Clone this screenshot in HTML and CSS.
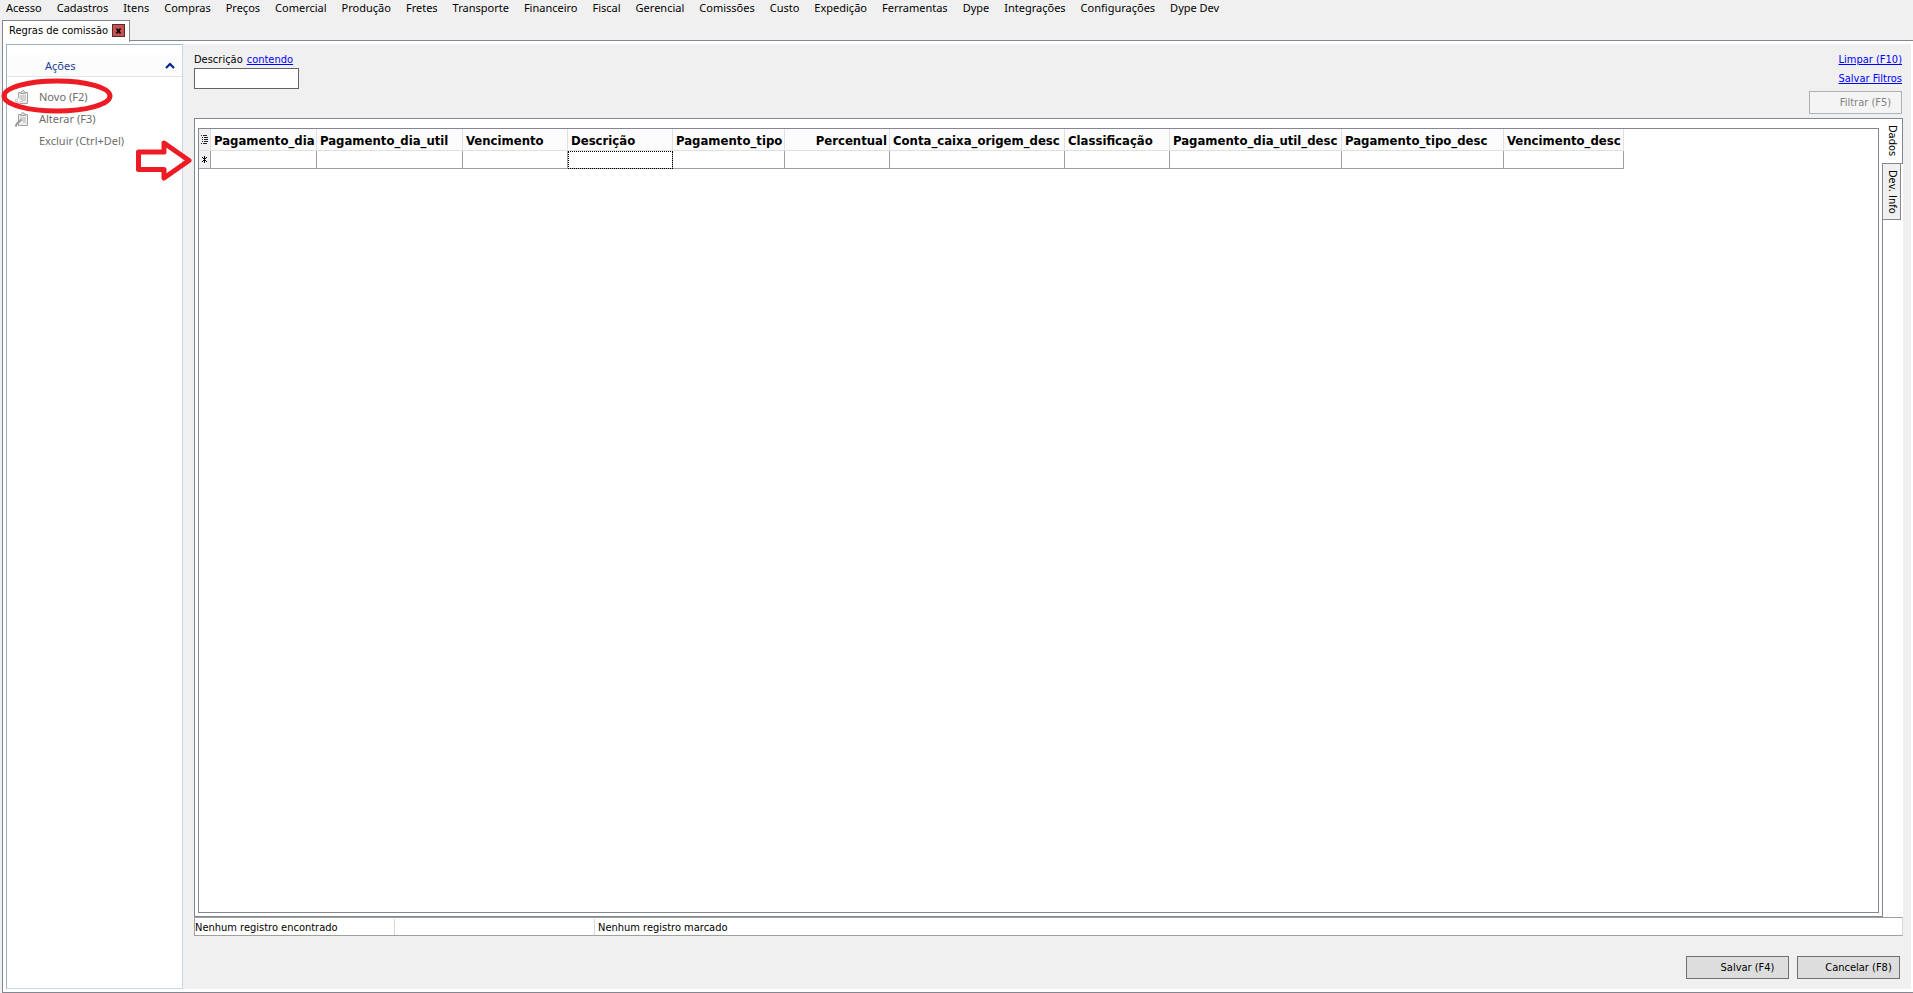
FILE: index.html
```html
<!DOCTYPE html>
<html lang="pt-BR">
<head>
    <meta charset="UTF-8">
    <meta name="viewport" content="width=device-width, initial-scale=1.0">
    <title>Regras de comissão</title>
    <link rel="stylesheet" href="styles.css">
</head>
<body>
    <nav class="menu-bar">
        <button type="button">Acesso</button>
        <button type="button">Cadastros</button>
        <button type="button">Itens</button>
        <button type="button">Compras</button>
        <button type="button">Preços</button>
        <button type="button">Comercial</button>
        <button type="button">Produção</button>
        <button type="button">Fretes</button>
        <button type="button">Transporte</button>
        <button type="button">Financeiro</button>
        <button type="button">Fiscal</button>
        <button type="button">Gerencial</button>
        <button type="button">Comissões</button>
        <button type="button">Custo</button>
        <button type="button">Expedição</button>
        <button type="button">Ferramentas</button>
        <button type="button">Dype</button>
        <button type="button">Integrações</button>
        <button type="button">Configurações</button>
        <button type="button">Dype Dev</button>
    </nav>

    <div class="page-tabs">
        <div class="page-tab">
            <span>Regras de comissão</span>
            <button type="button" class="tab-close" aria-label="Fechar">
                <svg width="5" height="6" viewBox="0 0 5 6"><path d="M0.5 0.5L4.5 5.5M4.5 0.5L0.5 5.5" stroke="#000" stroke-width="1.6"/></svg>
            </button>
        </div>
    </div>

    <div class="window">
        <aside class="sidebar">
            <button type="button" class="sidebar-header">
                <span>Ações</span>
                <svg width="10" height="7" viewBox="0 0 10 7"><path d="M1 6L5 2L9 6" fill="none" stroke="#00258c" stroke-width="2.2"/></svg>
            </button>
            <div class="actions">
                <button type="button" class="action" disabled>
                    <svg class="action-icon" width="13" height="15" viewBox="0 0 13 15">
                        <path d="M3.5 2.5H12.5V13.5H3.5Z" fill="#efefef" stroke="#a0a0a0"/>
                        <path d="M5.500 2.5L8 0.5L10.500 2.5V3.5H5.5Z" fill="#ddd" stroke="#a0a0a0"/>
                        <path d="M5 6H11M6 8H11M8 10H11" stroke="#b4b4b4"/>
                        <path d="M3.2 7.2H5.2V9.2H7.2V11.600H5.2V13.8H2.800V11.600H0.5V9.600H2.500Z" fill="#fafafa" stroke="#c0c0c0" stroke-linejoin="round"/>
                    </svg>
                    <span>Novo (F2)</span>
                </button>
                <button type="button" class="action" disabled>
                    <svg class="action-icon" width="13" height="15" viewBox="0 0 13 15">
                        <path d="M3.5 2.5H12.5V13.5H3.5Z" fill="#efefef" stroke="#a0a0a0"/>
                        <path d="M5.5 2.5L8 0.5L10.5 2.5V3.5H5.5Z" fill="#ddd" stroke="#a0a0a0"/>
                        <path d="M5 6H11M6 8H11M8 10H11" stroke="#b4b4b4"/>
                        <path d="M0.5 14.5L2 11.5L6.5 7.5" fill="none" stroke="#999" stroke-width="2"/>
                    </svg>
                    <span>Alterar (F3)</span>
                </button>
                <button type="button" class="action" disabled>
                    <span class="action-icon"></span>
                    <span>Excluir (Ctrl+Del)</span>
                </button>
            </div>
        </aside>

        <main class="content">
            <div class="filters">
                <div class="filter">
                    <div class="filter-label">
                        <label for="descricao">Descrição</label>
                        <a href="#">contendo</a>
                    </div>
                    <input type="text" id="descricao">
                </div>
                <div class="filter-actions">
                    <a href="#">Limpar (F10)</a>
                    <a href="#">Salvar Filtros</a>
                    <button type="button" class="btn btn-filter" disabled>Filtrar (F5)</button>
                </div>
            </div>

            <div class="data-area">
                <div class="data-panel">
                    <div class="grid">
                        <table>
                            <colgroup>
                                <col class="col-mark">
                                <col class="col-dia">
                                <col class="col-dia-util">
                                <col class="col-base">
                                <col class="col-base">
                                <col class="col-tipo">
                                <col class="col-base">
                                <col class="col-conta">
                                <col class="col-base">
                                <col class="col-dia-util-desc">
                                <col class="col-tipo-desc">
                                <col class="col-venc-desc">
                            </colgroup>
                            <thead>
                                <tr>
                                    <th class="mark">
                                        <svg width="7" height="9" viewBox="0 0 7 9"><path d="M0 0.5H1M2 0.5H6M1 2.5H2M3 2.5H7M1 4.5H2M3 4.5H7M1 6.5H2M3 6.5H7M0 8.5H1M2 8.5H6" stroke="#222" shape-rendering="crispEdges"/></svg>
                                    </th>
                                    <th>Pagamento_dia</th>
                                    <th>Pagamento_dia_util</th>
                                    <th>Vencimento</th>
                                    <th>Descrição</th>
                                    <th>Pagamento_tipo</th>
                                    <th class="number">Percentual</th>
                                    <th>Conta_caixa_origem_desc</th>
                                    <th>Classificação</th>
                                    <th>Pagamento_dia_util_desc</th>
                                    <th>Pagamento_tipo_desc</th>
                                    <th>Vencimento_desc</th>
                                </tr>
                            </thead>
                            <tbody>
                                <tr>
                                    <td class="mark">
                                        <svg width="5" height="7" viewBox="0 0 5 7"><path d="M2 0H3V7H2ZM0 1H1V2H0ZM4 1H5V2H4ZM1 2H4V3H1ZM1 4H4V5H1ZM0 5H1V6H0ZM4 5H5V6H4Z" fill="#000" shape-rendering="crispEdges"/></svg>
                                    </td>
                                    <td></td>
                                    <td></td>
                                    <td></td>
                                    <td class="focused"></td>
                                    <td></td>
                                    <td></td>
                                    <td></td>
                                    <td></td>
                                    <td></td>
                                    <td></td>
                                    <td></td>
                                </tr>
                            </tbody>
                        </table>
                    </div>
                </div>
                <div class="side-tabs">
                    <button type="button" class="side-tab active">Dados</button>
                    <button type="button" class="side-tab">Dev. Info</button>
                </div>
            </div>

            <div class="status-bar">
                <div class="status-cell">Nenhum registro encontrado</div>
                <div class="status-cell"></div>
                <div class="status-cell last">Nenhum registro marcado</div>
            </div>

            <div class="footer">
                <button type="button" class="btn">Salvar (F4)</button>
                <button type="button" class="btn">Cancelar (F8)</button>
            </div>
        </main>
    </div>

    <!-- red marks over the screen -->
    <svg class="marks" width="200" height="190" viewBox="0 0 200 190">
        <ellipse cx="57" cy="96" rx="53" ry="15" fill="none" stroke="#ed1c24" stroke-width="5"/>
        <path d="M138.500 152H164V143L189 160.500L164 178V169.500H138.500Z" fill="none" stroke="#ed1c24" stroke-width="5" stroke-linejoin="round"/>
    </svg>
</body>
</html>
```

FILE: styles.css
```css
* {
    box-sizing: border-box;
}

body {
    margin: 0;
    height: 100vh;
    display: flex;
    flex-direction: column;
    background: #f0f0f0;
    color: #000;
    font-family: "DejaVu Sans Condensed", "DejaVu Sans", sans-serif;
    font-size: 11px;
    line-height: 14px;
}

button,
input {
    font: inherit;
    color: inherit;
    padding: 0;
    border-radius: 0;
}

button {
    border: none;
    background: none;
}

a {
    color: #0000ff;
}

.menu-bar {
    display: flex;
    gap: 15px;
    height: 20px;
    padding: 0 6px 4px;
    font-family: "Noto Sans", sans-serif;
    white-space: nowrap;
}

.page-tabs {
    display: flex;
    height: 20px;
    padding-left: 2px;
}

.page-tab {
    position: relative;
    z-index: 1;
    display: flex;
    justify-content: space-between;
    width: 128px;
    height: 22px;
    padding: 3px 4px 0 6px;
    background: #fff;
    border: 1px solid #828790;
    border-bottom: none;
    white-space: nowrap;
}

.tab-close {
    display: flex;
    align-items: center;
    justify-content: center;
    width: 13px;
    height: 13px;
    background: #c75050;
    border: 1px solid #5a2a2a;
}

.window {
    flex: 1;
    display: flex;
    margin-left: 2px;
    padding: 3px 2px 3px 3px;
    background: #fff;
    border: 1px solid #828790;
    border-right: none;
}

.sidebar {
    width: 177px;
    padding-top: 10px;
    background: #fff;
    border: 1px solid #c8d8e4;
    border-left-color: #a0b4c8;
    border-top-color: #a0b4c8;
    font-family: "Noto Sans", sans-serif;
}

.sidebar-header {
    display: flex;
    align-items: center;
    justify-content: space-between;
    width: 100%;
    height: 22px;
    padding: 0 7px 0 38px;
    background: #fcfcfc;
    border-bottom: 1px solid #e5e5e5;
    color: #1e3f94;
}

.actions {
    display: flex;
    flex-direction: column;
    padding: 9px 8px;
}

.action {
    display: flex;
    align-items: center;
    gap: 11px;
    height: 22px;
    color: #6d6d6d;
    white-space: nowrap;
}

.action-icon {
    flex: none;
    width: 13px;
}

.content {
    flex: 1;
    display: flex;
    flex-direction: column;
    padding: 9px 8px 10px 11px;
    background: #f0f0f0;
}

.filters {
    display: flex;
    justify-content: space-between;
    height: 65px;
}

.filter-label {
    display: flex;
    gap: 4px;
    height: 15px;
}

.filter input {
    display: block;
    width: 105px;
    height: 21px;
    padding: 0 4px;
    background: #fff;
    border: 1px solid #646464;
}

.filter-actions {
    display: flex;
    flex-direction: column;
    align-items: flex-end;
    gap: 5px;
    padding-right: 1px;
}

.btn {
    width: 103px;
    height: 23px;
    padding-left: 20px;
    background: #ddd;
    border: 1px solid #707070;
    text-align: center;
}

.btn-filter {
    width: 93px;
    background: #f4f4f4;
    border-color: #adb2b5;
    color: #838383;
}

.data-area {
    flex: 1;
    display: flex;
    background: #fff;
}

.data-panel {
    flex: 1;
    display: flex;
    padding: 9px 3px 3px;
    border: 1px solid #828790;
}

.grid {
    flex: 1;
    background: #fff;
    border: 1px solid #828790;
}

.grid table {
    table-layout: fixed;
    width: 1425px;
    border-spacing: 0;
}

.col-mark { width: 12px; }
.col-base { width: 105px; }
.col-dia { width: 106px; }
.col-dia-util { width: 146px; }
.col-tipo { width: 112px; }
.col-conta { width: 175px; }
.col-dia-util-desc { width: 172px; }
.col-tipo-desc { width: 162px; }
.col-venc-desc { width: 120px; }

.grid th {
    height: 22px;
    padding: 2px 2px 0 3px;
    background: #fcfcfc;
    border-right: 1px solid #e0e0e0;
    border-bottom: 1px solid #e0e0e0;
    font-size: 13px;
    line-height: 16px;
    text-align: left;
    white-space: nowrap;
}

.grid th.number {
    text-align: right;
}

.grid td {
    height: 18px;
    padding: 0;
    border-right: 1px solid #a0a0a0;
    border-bottom: 1px solid #a0a0a0;
}

.grid .mark {
    padding: 0;
    background: #f0f0f0;
    text-align: center;
}

.grid .mark svg {
    display: block;
    margin: 0 auto;
}

.grid .focused {
    outline: 1px dotted #000;
    outline-offset: -1px;
}

.side-tabs {
    display: flex;
    flex-direction: column;
    align-items: flex-start;
    width: 20px;
}

.side-tab {
    writing-mode: vertical-rl;
    width: 18px;
    height: 56px;
    background: #f0f0f0;
    border: 1px solid #828790;
    border-top: none;
    border-left: none;
    text-align: center;
    white-space: nowrap;
}

/* covers the panel border so the tab looks joined to it */
.side-tab.active {
    width: 21px;
    height: 46px;
    margin-left: -1px;
    background: #fff;
    border-top: 1px solid #828790;
}

.status-bar {
    display: flex;
    height: 19px;
    background: #fff;
    border: 1px solid #a0a0a0;
    border-right-color: #d7d7d7;
}

.status-cell {
    width: 200px;
    margin-top: 1px;
    padding: 2px 0 0;
    border-right: 1px solid #d7d7d7;
    white-space: nowrap;
}

.status-cell.last {
    flex: 1;
    padding-left: 3px;
    border-right: none;
}

.footer {
    display: flex;
    justify-content: flex-end;
    gap: 8px;
    padding: 20px 3px 0 0;
}

.marks {
    position: absolute;
    top: 0;
    left: 0;
    pointer-events: none;
}
```
